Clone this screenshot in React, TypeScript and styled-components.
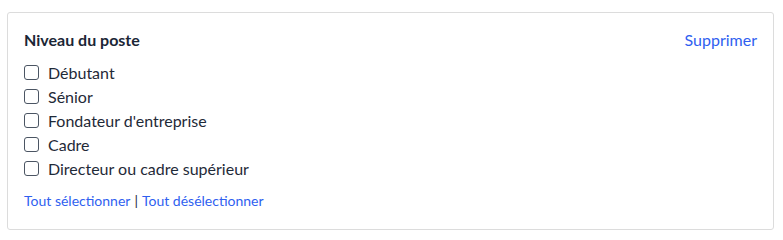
import React, { useState } from "react";
import styled, { createGlobalStyle } from "styled-components";

const GlobalStyle = createGlobalStyle`
    body {
        margin: 0;
        background: #ffffff;
        font-family: "Lato", "Open Sans", sans-serif;
    }
`

const Card = styled.section`
    box-sizing: border-box;
    margin: 12px 9px 0 7px;
    height: 218px;
    padding: 15px 16px 0 16px;
    border: 1px solid #dcdcdc;
    border-radius: 3px;
    background: #fff;
`

const Header = styled.div`
    display: flex;
    align-items: center;
    justify-content: space-between;
    height: 22px;
    margin-bottom: 10px;
`

const Title = styled.h3`
    margin: 0;
    font-size: 16px;
    font-weight: 700;
    color: #1b2636;
`

const LinkButton = styled.button<{ $size?: number }>`
    padding: 0;
    border: none;
    background: none;
    font-family: inherit;
    font-size: ${(p) => p.$size ?? 16}px;
    color: #2f5ff0;
    cursor: pointer;
`

const List = styled.ul`
    list-style: none;
    margin: 0;
    padding: 0;
`

const Row = styled.li`
    display: flex;
    align-items: center;
    gap: 9px;
    height: 24px;
`

const Box = styled.span<{ $checked: boolean }>`
    box-sizing: border-box;
    width: 15px;
    height: 15px;
    border: 1.5px solid #4b5563;
    border-radius: 3px;
    background: ${(p) => (p.$checked ? "#2f5ff0" : "#fff")};
    border-color: ${(p) => (p.$checked ? "#2f5ff0" : "#4b5563")};
    cursor: pointer;
`

const Label = styled.label`
    font-size: 16px;
    color: #1f2a38;
    cursor: pointer;
`

const Footer = styled.div`
    display: flex;
    align-items: center;
    gap: 4px;
    margin-top: 11px;
    height: 18px;
    color: #1f2a38;
    font-size: 14px;
`

const options = [
    "Débutant",
    "Sénior",
    "Fondateur d'entreprise",
    "Cadre",
    "Directeur ou cadre supérieur",
]

const App = () => {
    const [checked, setChecked] = useState<boolean[]>(options.map(() => false))

    const toggle = (i: number) =>
        setChecked((c) => c.map((v, j) => (j === i ? !v : v)))

    return (
        <>
            <GlobalStyle />
            <Card>
                <Header>
                    <Title>Niveau du poste</Title>
                    <LinkButton onClick={() => setChecked(options.map(() => false))}>Supprimer</LinkButton>
                </Header>
                <List>
                    {options.map((o, i) => (
                        <Row key={o} onClick={() => toggle(i)}>
                            <Box $checked={checked[i]} />
                            <Label>{o}</Label>
                        </Row>
                    ))}
                </List>
                <Footer>
                    <LinkButton $size={14} onClick={() => setChecked(options.map(() => true))}>Tout sélectionner</LinkButton>
                    |
                    <LinkButton $size={14} onClick={() => setChecked(options.map(() => false))}>Tout désélectionner</LinkButton>
                </Footer>
            </Card>
        </>
    )
}

export default App
